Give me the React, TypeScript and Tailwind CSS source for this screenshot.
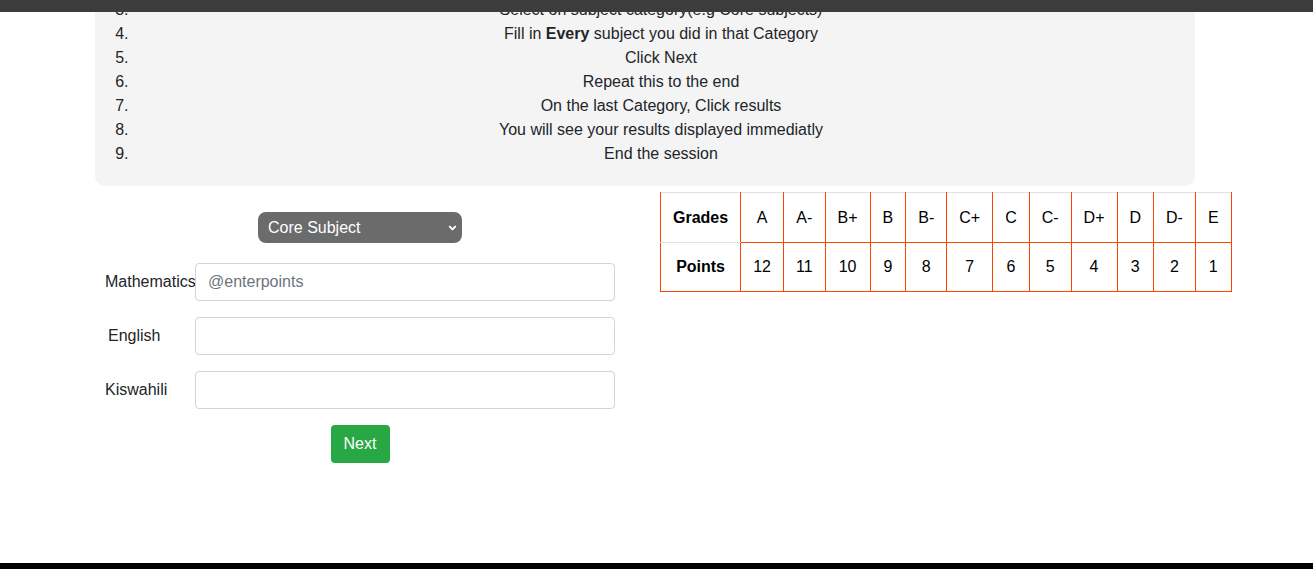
import React from "react";

const steps = [
  "Select on subject category(e.g Core subjects)",
  null,
  "Click Next",
  "Repeat this to the end",
  "On the last Category, Click results",
  "You will see your results displayed immediatly",
  "End the session",
];

const grades = ["A", "A-", "B+", "B", "B-", "C+", "C", "C-", "D+", "D", "D-", "E"];
const points = [12, 11, 10, 9, 8, 7, 6, 5, 4, 3, 2, 1];

const subjects = [
  { name: "Mathematics", placeholder: "@enterpoints", pad: "" },
  { name: "English", placeholder: "", pad: "pl-[3px]" },
  { name: "Kiswahili", placeholder: "", pad: "" },
];

export default function App() {
  return (
    <div className="relative h-[569px] w-full overflow-hidden bg-white text-[#212529] font-['Liberation_Sans',Arial,sans-serif] text-base">
      <div className="absolute top-0 left-0 right-0 h-[12px] bg-[#3c3c3c] z-10" />

      <div className="ml-[95px] mt-[-2px] w-[1100px] rounded-b-[10px] bg-[#f4f4f4] pl-[38px] pr-[6px] pb-[20px]">
        <ol start={3} className="list-decimal text-center leading-6">
          {steps.map((s, i) => (
            <li key={i}>
              {s === null ? (
                <>
                  Fill in <b>Every</b> subject you did in that Category
                </>
              ) : (
                s
              )}
            </li>
          ))}
        </ol>
      </div>

      <div className="flex ml-[95px]">
        <div className="w-[530px] px-[10px] pt-[26px] flex flex-col items-center">
          <div className="relative w-[204px] h-[31px]">
            <select className="appearance-none w-full h-full rounded-lg bg-[#6b6b6b] text-white pl-[10px] pr-6 outline-none">
              <option>Core Subject</option>
            </select>
            <svg
              className="absolute right-[5px] top-[12px] pointer-events-none"
              width="9"
              height="8"
              viewBox="0 0 10 8"
              fill="none"
              stroke="white"
              strokeWidth="2.2"
              strokeLinecap="round"
              strokeLinejoin="round"
            >
              <path d="M2 2.5 L5 5.5 L8 2.5" />
            </svg>
          </div>

          <div className="mt-[20px] flex flex-col gap-4 w-full">
            {subjects.map((s) => (
              <div key={s.name} className="flex items-center">
                <label className={`w-[90px] shrink-0 ${s.pad}`}>{s.name}</label>
                <input
                  className="w-[420px] h-[38px] rounded border border-[#ced4da] bg-white px-3 placeholder:text-[#6c757d] outline-none"
                  placeholder={s.placeholder}
                />
              </div>
            ))}
          </div>

          <button className="mt-4 h-[38px] w-[59px] rounded bg-[#28a745] text-white">Next</button>
        </div>

        <div className="pl-[35px] pt-[6px]">
          <table className="border-collapse border-t border-t-[#dee2e6] text-black">
            <tbody>
              <tr className="h-[50px]">
                <th className="border-x border-b border-x-[#ff4500] border-b-[#dee2e6] px-3 leading-6 font-bold">Grades</th>
                {grades.map((g) => (
                  <td key={g} className="border-x border-b border-[#ff4500] border-t-[#dee2e6] px-3 leading-6 text-center">
                    {g}
                  </td>
                ))}
              </tr>
              <tr className="h-[49px]">
                <th className="border border-[#ff4500] border-t-[#dee2e6] px-3 leading-6 font-bold">Points</th>
                {points.map((p) => (
                  <td key={p} className="border border-[#ff4500] px-3 leading-6 text-center">
                    {p}
                  </td>
                ))}
              </tr>
            </tbody>
          </table>
        </div>
      </div>

      <div className="absolute bottom-0 left-0 right-0 h-[6px] bg-black" />
    </div>
  );
}
